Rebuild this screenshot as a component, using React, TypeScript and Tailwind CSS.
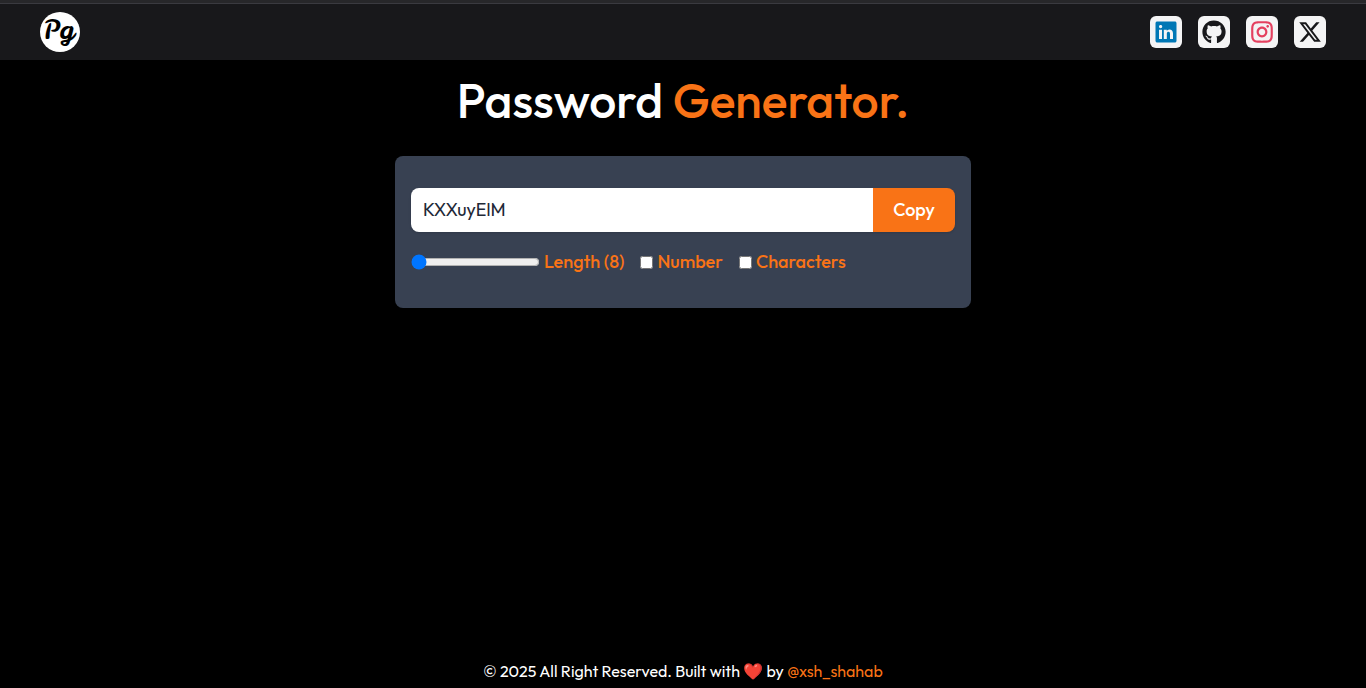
import { useState } from "react";
import { IoLogoLinkedin } from "react-icons/io5";
import { RiInstagramLine } from "react-icons/ri";
import { FaGithub, FaXTwitter } from "react-icons/fa6";

const socials = [
  { name: "LinkedIn", Icon: IoLogoLinkedin, style: "size-6 text-[#0077b5]" },
  { name: "GitHub", Icon: FaGithub, style: "size-6 text-[#18181b]" },
  { name: "Instagram", Icon: RiInstagramLine, style: "size-[26px] text-[#e4405f]" },
  { name: "X", Icon: FaXTwitter, style: "size-6 text-[#18181b]" },
];

export default function App() {
  const [length, setLength] = useState(8);
  return (
    <div className="flex h-screen flex-col overflow-hidden bg-black font-['Outfit','Lato',sans-serif] text-white">
      <div className="h-1 shrink-0 border-b border-[#3a3a40] bg-[#27272a]" />
      <header className="flex h-14 shrink-0 items-center justify-between bg-[#18181b] px-10">
        <div className="flex size-10 items-center justify-center rounded-full bg-white">
          <span className="-mt-1 mr-0.5 font-['Leckerli_One',cursive] text-[26px] leading-none text-black">Pg</span>
        </div>
        <nav className="flex gap-4">
          {socials.map(({ name, Icon, style }) => (
            <a key={name} href="#" aria-label={name} className="flex size-8 items-center justify-center rounded-md bg-[#f4f4f5]">
              <Icon className={style} />
            </a>
          ))}
        </nav>
      </header>
      <main className="flex grow flex-col items-center">
        <h1 className="mt-4 whitespace-nowrap text-5xl font-medium leading-none">
          Password <span className="text-[#f97316]">Generator.</span>
        </h1>
        <section className="mt-8 h-[152px] w-[576px] rounded-lg bg-[#384152] px-4 py-8 text-lg text-[#f97316]">
          <div className="flex h-11 overflow-hidden rounded-lg shadow-sm">
            <input readOnly value="KXXuyElM" className="min-w-0 grow bg-white px-3 text-[#1f2937] outline-none" />
            <button className="w-[82px] bg-[#f97316] font-medium text-white">Copy</button>
          </div>
          <div className="mt-4 flex h-7 items-center gap-4 font-medium whitespace-nowrap">
            <div className="flex items-center gap-1">
              <input type="range" min={8} max={100} value={length} onChange={(e) => setLength(+e.target.value)} className="h-4 w-[129px]" />
              <label>Length ({length})</label>
            </div>
            <div className="flex items-center gap-1">
              <input type="checkbox" className="mt-px size-[13px]" />
              <label>Number</label>
            </div>
            <div className="flex items-center gap-1">
              <input type="checkbox" className="mt-px size-[13px]" />
              <label>Characters</label>
            </div>
          </div>
        </section>
      </main>
      <footer className="shrink-0 whitespace-nowrap pb-[5px] text-center text-base leading-6">
        © 2025 All Right Reserved. Built with ❤️ by{" "}
        <a href="#" className="text-[#f97316]">@xsh_shahab</a>
      </footer>
    </div>
  );
}
